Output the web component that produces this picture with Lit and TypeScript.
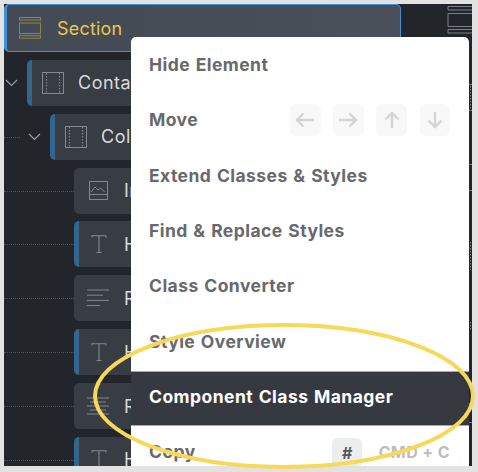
import { LitElement, html, css, svg } from "lit";
import { customElement } from "lit/decorators.js";

const ICON_SECTION = svg`<rect x="0.5" y="0.5" width="21" height="2.5"/><rect x="0.5" y="6" width="21" height="10.5"/><rect x="0.5" y="18.7" width="21" height="2.5"/>`;
const ICON_COL = svg`<rect x="0.5" y="0.5" width="21" height="21"/><path d="M4.5 1v20M17.5 1v20" stroke-dasharray="1.5 1.5"/>`;
const ICON_IMG = svg`<rect x="0.5" y="0.5" width="18" height="18"/><path d="M1 13.5h17M2 11l4-5 3 3 2.5-2 4 4"/>`;
const ICON_T = svg`<path d="M1 2.500V0.700h14v1.800M8 0.700v17M5.500 17.500h5"/>`;

interface Row { indent: number; icon: "col" | "img" | "t" | "left" | "center"; label: string; bar: boolean; chevron?: boolean; line?: boolean; }

const ROWS: Row[] = [
  { indent: 23, icon: "col", label: "Container", bar: true, chevron: true },
  { indent: 46, icon: "col", label: "Column", bar: true, chevron: true, line: true },
  { indent: 70, icon: "img", label: "Image", bar: false, line: true },
  { indent: 70, icon: "t", label: "Heading", bar: true, line: true },
  { indent: 70, icon: "left", label: "Rich Text", bar: false, line: true },
  { indent: 70, icon: "t", label: "Heading", bar: true, line: true },
  { indent: 70, icon: "center", label: "Rich Text", bar: false, line: true },
  { indent: 70, icon: "t", label: "Heading", bar: true, line: true },
];

function textIcon(center: boolean) {
  const lines = center
    ? [[0, 22], [3, 19], [0, 22], [3, 19], [0, 22]]
    : [[0, 22], [0, 16], [0, 22], [0, 13]];
  const gap = center ? 4 : 5.2;
  return svg`<svg class="ti" width="22" height="18" viewBox="0 0 22 18" fill="none" stroke="currentColor" stroke-width="1">
    ${lines.map((l, i) => svg`<path d="M${l[0]} ${i * gap + 1}H${l[1]}"/>`)}
  </svg>`;
}

function rowIcon(k: Row["icon"]) {
  if (k === "left") return textIcon(false);
  if (k === "center") return textIcon(true);
  if (k === "t") return html`<svg class="ti t" width="16" height="19" viewBox="0 0 16 19" fill="none" stroke="currentColor" stroke-width="1.1">${ICON_T}</svg>`;
  if (k === "img") return html`<svg class="ti" width="19" height="19" viewBox="0 0 19 19" fill="none" stroke="currentColor" stroke-width="1">${ICON_IMG}</svg>`;
  return html`<svg class="ti" width="22" height="22" viewBox="0 0 22 22" fill="none" stroke="currentColor" stroke-width="1">${ICON_COL}</svg>`;
}

@customElement("app-root")
export class AppRoot extends LitElement {
  static styles = css`
    :host { display: block; width: 478px; height: 472px; background: #e2e2e2; overflow: hidden; position: relative; font-family: Inter, "Liberation Sans", sans-serif; }
    .stage { margin: 4px 0 0 4px; width: 468px; height: 462px; background: #22252a; position: relative; overflow: hidden; }
    .tree { display: flex; flex-direction: column; gap: 7.870px; width: 127px; }
    .sec { height: 48px; box-sizing: border-box; width: 397px; border: 1px solid #3f92d8; border-left-width: 3px; border-radius: 5px; background: linear-gradient(90deg, #444a53, #4a505a); display: flex; align-items: center; color: #e6c850; font-size: 18px; letter-spacing: .2px; padding-left: 12px; gap: 16px; flex: none; }
    .sec svg { color: #8f8648; flex: none; }
    .row { display: flex; align-items: center; height: 46px; flex: none; position: relative; }
    .chev { position: absolute; top: 19px; width: 13px; height: 8px; color: #9a9da1; }
    .hl { position: absolute; left: 0; top: 23px; height: 0; border-top: 1px dotted #50545a; }
    .card { flex: 1; min-width: 0; height: 46px; box-sizing: border-box; border-radius: 5px 0 0 5px; background: #383c43; display: flex; align-items: center; color: #d8d9db; font-size: 18px; letter-spacing: .5px; position: relative; overflow: hidden; }
    .card.bar { border-left: 5px solid #33668f; }
    .ti { color: #85888d; flex: none; }
    .ti.t { margin-right: 2px; }
    .iw { width: 48px; display: flex; justify-content: center; flex: none; }
    .card.bar .iw { width: 41px; }
    .lbl { flex: 1; min-width: 0; overflow: hidden; white-space: nowrap; margin-left: 2px; }
    .card.bar .lbl { margin-left: 4px; }
    .card.wide .lbl { margin-left: 5px; }
    .menu { position: absolute; left: 127px; top: 33px; width: 338px; height: 440px; background: #fff; border-radius: 5px 5px 0 0; display: flex; flex-direction: column; z-index: 2; }
    .item { height: 55.350px; flex: none; box-sizing: border-box; padding: 0 19px .6px 18px; display: flex; align-items: center; font-weight: 700; font-size: 17.500px; letter-spacing: .45px; word-spacing: 1px; color: #67696c; }
    .item.active { margin-top: 2px; padding-bottom: 4px; background: #363a40; color: #fff; border-top: 1px solid #a6a8aa; border-bottom: 1px solid #a6a8aa; }
    .item.copy { height: 51.300px; }
    .item .sp { flex: 1; }
    .ak { display: flex; gap: 12.670px; }
    .ak span { width: 30.500px; height: 32px; border-radius: 6px; background: #f8f8f8; display: flex; align-items: center; justify-content: center; color: #d4d4d4; }
    .hash { width: 30px; height: 30px; margin-top: 3px; background: #eceded; border-radius: 6px; display: flex; align-items: center; justify-content: center; color: #55585c; font-size: 16px; letter-spacing: 0; flex: none; }
    .cmd { color: #bcbdbf; font-size: 16px; margin-left: 16.500px; letter-spacing: .4px; word-spacing: 0; font-weight: 700; }
    .rail { position: absolute; right: 0; top: 0; width: 25px; height: 462px; color: #7d8085; }
    .ell { position: absolute; left: 0; top: 0; pointer-events: none; z-index: 3; }
  `;

  render() {
    const moves = [
      "M19 9H2M8.500 2.500 2 9l6.500 6.500",
      "M1 9h17M11.500 2.500 18 9l-6.500 6.500",
      "M10 17V2M3.500 8.500 10 2l6.500 6.500",
      "M10 1v15M3.500 9.500 10 16l6.500-6.500",
    ];
    return html`
      <div class="stage">
        <div class="tree">
          <div class="sec">
            <svg width="22" height="22" viewBox="0 0 22 22" fill="none" stroke="currentColor" stroke-width="1">${ICON_SECTION}</svg>
            <span>Section</span>
          </div>
          ${ROWS.map((r) => html`
            <div class="row" style="padding-left:${r.indent}px">
              ${r.line ? html`<div class="hl" style="width:${r.indent - (r.chevron ? 30 : 0)}px"></div>` : ""}
              ${r.chevron ? html`<svg class="chev" style="left:${r.indent - 22}px" viewBox="0 0 13 8" fill="none" stroke="currentColor" stroke-width="1.200"><path d="M1 1l5.500 5.500L12 1"/></svg>` : ""}
              <div class="card ${r.bar ? "bar" : ""} ${r.chevron ? "wide" : ""}">
                <div class="iw">${rowIcon(r.icon)}</div>
                <span class="lbl">${r.label}</span>
              </div>
            </div>`)}
        </div>
        <div class="rail">
          <svg width="25" height="462" viewBox="0 0 25 462" fill="none" stroke="currentColor" stroke-width="1">
            <path d="M25 2.500H1v3.500h24M25 9.500H1v13h24M25 25.500H1v3.500h24"/>
            <path d="M22 80.500h3M22 106.500h3M22 160.500h3M22 186.500h3M22 399.500h3M22 418.500h3"/>
            <path d="M23.500 82v23M23.500 238v28M23.500 318v8" stroke-dasharray="1.500 1.500"/>
          </svg>
        </div>
        <div class="menu">
          <div class="item">Hide Element</div>
          <div class="item">Move<span class="sp"></span>
            <div class="ak">${moves.map((d) => html`<span><svg width="20" height="18" viewBox="0 0 20 18" fill="none" stroke="currentColor" stroke-width="2.400"><path d="${d}"/></svg></span>`)}</div>
          </div>
          <div class="item">Extend Classes &amp; Styles</div>
          <div class="item">Find &amp; Replace Styles</div>
          <div class="item">Class Converter</div>
          <div class="item">Style Overview</div>
          <div class="item active">Component Class Manager</div>
          <div class="item copy">Copy<span class="sp"></span><span class="hash">#</span><span class="cmd">CMD + C</span></div>
        </div>
      </div>
      <svg class="ell" width="478" height="472" viewBox="0 0 478 472" fill="none"><ellipse cx="284" cy="396" rx="189" ry="71" stroke="#f8d858" stroke-width="4"/></svg>
    `;
  }
}
